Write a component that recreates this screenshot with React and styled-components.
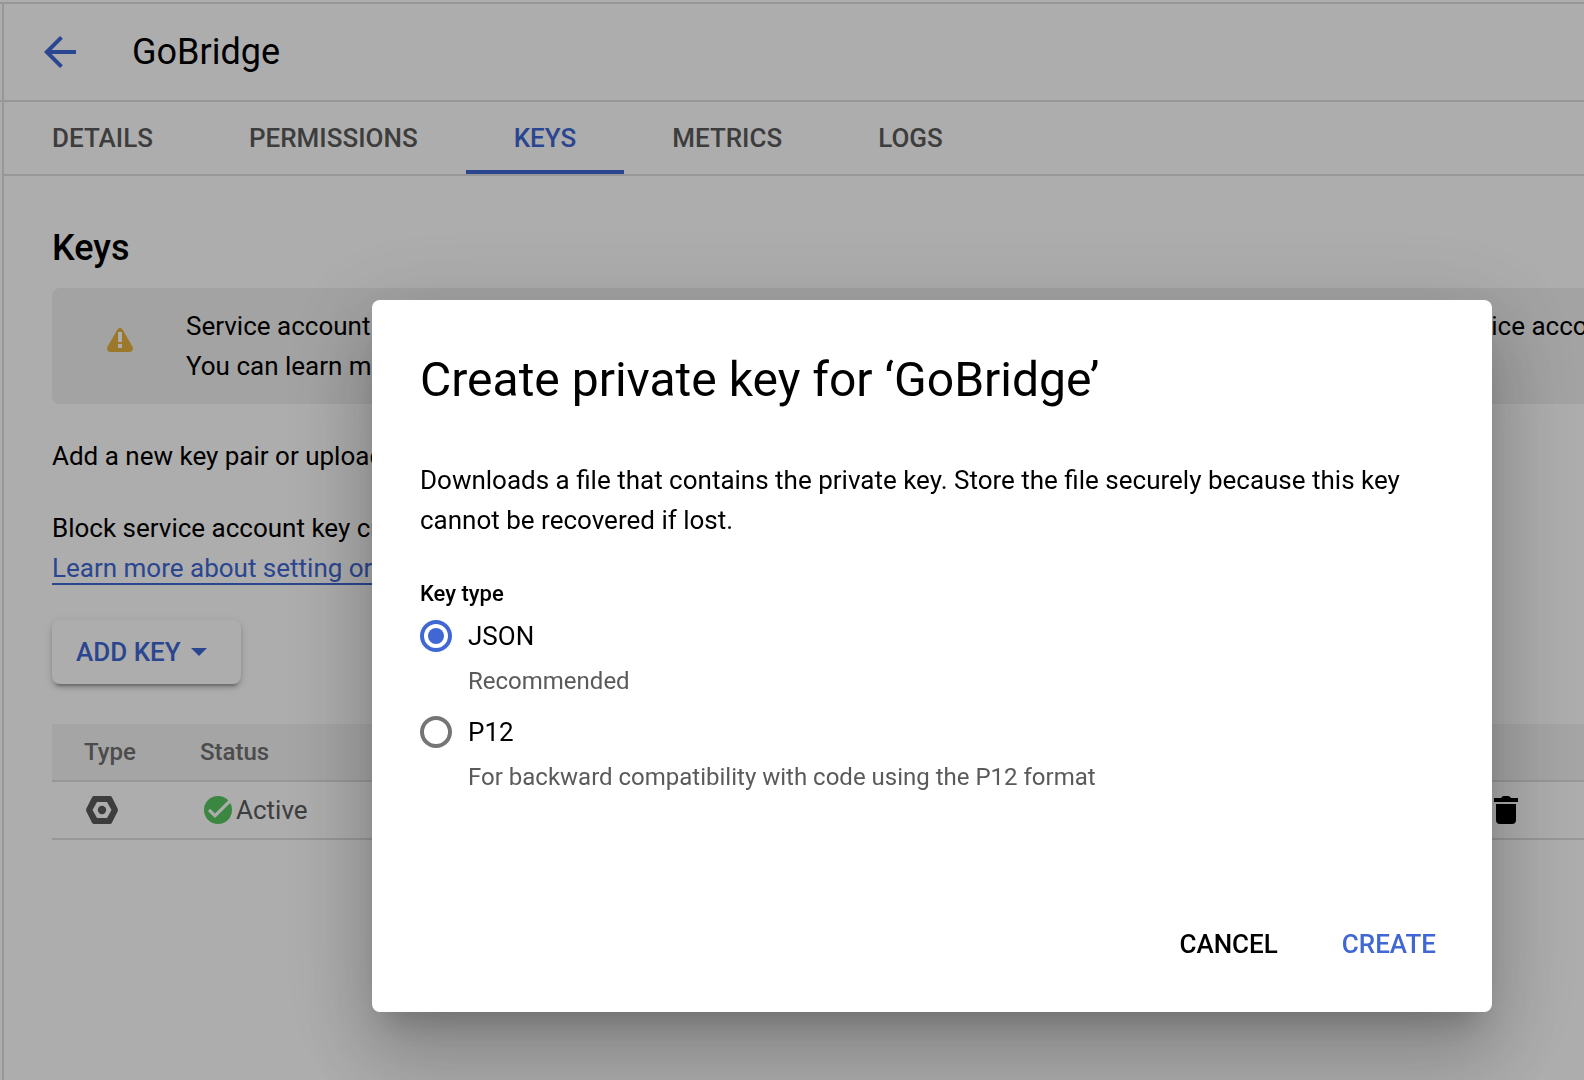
import React, { useState } from "react";
import styled, { createGlobalStyle } from "styled-components";

const blue = "#4067d4";
const line = "#dfdfdf";
const grey = "#5a5a5a";

const GlobalStyle = createGlobalStyle`
  *, *::before, *::after { box-sizing: border-box; }
  body {
    margin: 0;
    background: #ffffff;
    color: #000000;
    font: 400 26px/40px Roboto, "Liberation Sans", sans-serif;
    overflow: hidden;
  }
  button { font: inherit; border: 0; background: none; cursor: pointer; }
  h1, h2, p, fieldset { margin: 0; padding: 0; border: 0; min-width: 0; }
`;

const Page = styled.div`
  display: flex;
  flex-direction: column;
  min-height: 100vh;
  overflow: hidden;
`;

const TopEdge = styled.div`
  height: 4px;
  border-bottom: 2px solid ${line};
`;

const Shell = styled.div`
  display: flex;
  flex: 1;
`;

const Rail = styled.div`
  flex: none;
  width: 4px;
  border-right: 2px solid ${line};
`;

const RailHead = styled.div`
  height: 98px;
  border-bottom: 2px solid ${line};
`;

const Main = styled.main`
  flex: 1;
  min-width: 0;
`;

const Header = styled.header`
  display: flex;
  align-items: center;
  gap: 48px;
  height: 98px;
  padding: 0 32px;
  border-bottom: 2px solid ${line};
`;

const BackButton = styled.button`
  display: flex;
  padding: 0;
  color: ${blue};
`;

const PageTitle = styled.h1`
  font-size: 36px;
  font-weight: 400;
  line-height: 48px;
`;

const Tabs = styled.nav`
  display: flex;
  height: 74px;
  border-bottom: 2px solid ${line};
`;

const Tab = styled.a`
  display: flex;
  align-items: center;
  padding: 0 48px;
  font-weight: 500;
  text-decoration: none;
  color: ${(p) => (p.$active ? blue : grey)};
  box-shadow: ${(p) => (p.$active ? `inset 0 -4px 0 ${blue}` : "none")};
`;

const Content = styled.div`
  padding: 48px 0 48px 48px;
`;

const SectionTitle = styled.h2`
  font-size: 36px;
  font-weight: 500;
  line-height: 48px;
`;

const Banner = styled.div`
  display: flex;
  gap: 53px;
  margin-top: 16px;
  padding: 18px 0 18px 55px;
  border-radius: 8px 0 0 8px;
  background: #f0f0f0;
  white-space: nowrap;
  overflow: hidden;

  svg {
    flex: none;
    margin-top: 22px;
  }
`;

const Paragraph = styled.p`
  margin-top: 32px;
  white-space: nowrap;
`;

const TextLink = styled.a`
  color: ${blue};
  text-decoration: none;
  border-bottom: 2px solid ${blue};
`;

const AddButton = styled.button`
  display: flex;
  align-items: center;
  gap: 10px;
  height: 64px;
  margin: 32px 0 40px;
  padding: 0 34px 0 24px;
  border-radius: 8px;
  font-weight: 500;
  color: ${blue};
  background: #ffffff;
  box-shadow: 0 6px 2px -4px rgba(0, 0, 0, 0.2), 0 4px 4px rgba(0, 0, 0, 0.14),
    0 2px 10px rgba(0, 0, 0, 0.12);
`;

const KeyTable = styled.table`
  width: 100%;
  table-layout: fixed;
  border-collapse: separate;
  border-spacing: 0;
`;

const HeadCell = styled.th`
  width: ${(p) => p.$width || "auto"};
  height: 58px;
  padding: 0 0 0 32px;
  border-bottom: 2px solid ${line};
  background: #f3f3f3;
  color: #717171;
  font-size: 24px;
  font-weight: 500;
  line-height: 32px;
  text-align: left;
`;

const Cell = styled.td`
  height: 58px;
  padding: 0 0 0 ${(p) => (p.$flush ? "0" : "32px")};
  border-bottom: 2px solid ${line};
  color: ${grey};
`;

const CellContent = styled.div`
  display: flex;
  align-items: center;
`;

const DeleteButton = styled.button`
  display: flex;
  padding: 0;
  color: #000000;
`;

const Backdrop = styled.div`
  position: fixed;
  inset: 0;
  display: flex;
  align-items: center;
  justify-content: center;
  padding: 232px 0 0 280px;
  background: rgba(0, 0, 0, 0.32);
`;

const Dialog = styled.div`
  width: 100%;
  max-width: 1120px;
  border-radius: 8px;
  background: #ffffff;
  box-shadow: 0 22px 30px -14px rgba(0, 0, 0, 0.2),
    0 48px 76px 6px rgba(0, 0, 0, 0.14), 0 18px 92px 16px rgba(0, 0, 0, 0.12);
`;

const DialogBody = styled.div`
  padding: 48px 48px 0;
`;

const DialogTitle = styled.h2`
  margin-bottom: 48px;
  font-size: 48px;
  font-weight: 400;
  line-height: 64px;
`;

const KeyTypes = styled.fieldset`
  display: flex;
  flex-direction: column;
  gap: 14px;
  margin-top: 40px;
`;

const Legend = styled.legend`
  padding: 0;
  margin-bottom: 8px;
  font-size: 22px;
  font-weight: 500;
  line-height: 28px;
`;

const OptionLabel = styled.label`
  display: flex;
  align-items: center;
  gap: 16px;
`;

const Radio = styled.input`
  appearance: none;
  width: 32px;
  height: 32px;
  margin: 0;
  padding: 4px;
  border: 4px solid #757575;
  border-radius: 50%;
  background-clip: content-box;

  &:checked {
    border-color: ${blue};
    background-color: ${blue};
  }
`;

const Hint = styled.p`
  margin: 8px 0 0 48px;
  color: ${grey};
  font-size: 24px;
  line-height: 34px;
`;

const Actions = styled.div`
  display: flex;
  justify-content: flex-end;
  gap: 16px;
  padding: 114px 32px 32px;
`;

const ActionButton = styled.button`
  height: 72px;
  padding: 0 24px;
  font-weight: 500;
  color: ${(p) => (p.$primary ? blue : "#000000")};
`;

const BackIcon = () => (
  <svg width="48" height="48" viewBox="0 0 24 24" fill="currentColor" aria-hidden="true">
    <path d="M20 11H7.83l5.59-5.59L12 4l-8 8 8 8 1.41-1.41L7.83 13H20v-2z" />
  </svg>
);

const WarningIcon = () => (
  <svg width="26" height="24" viewBox="0 0 26 24" aria-hidden="true">
    <path
      d="M10.3 1.7C11.5-.5 14.5-.5 15.7 1.7L25.4 18.6C26.8 21.2 25.4 24 22.6 24H3.4C.6 24-.8 21.2.6 18.6Z"
      fill="#e6b33e"
    />
    <path d="M11 4h4v10h-4zM11 16h4v4h-4z" fill="#ffffff" />
  </svg>
);

const CaretIcon = () => (
  <svg width="16" height="8" viewBox="0 0 16 8" fill="currentColor" aria-hidden="true">
    <path d="M0 0h16L8 8z" />
  </svg>
);

const KeyTypeIcon = () => (
  <svg width="36" height="36" viewBox="0 0 36 36" fill={grey} role="img" aria-label="Service account key">
    <path
      fillRule="evenodd"
      d="M10 4h16q1.200 0 1.800 1l5.800 11.600q.7 1.400 0 2.800L27.800 31q-.6 1-1.800 1H10q-1.200 0-1.800-1L2.400 19.400q-.7-1.400 0-2.800L8.200 5q.6-1 1.800-1zM13 10L8.500 18l4.500 8h10l4.500-8L23 10z"
    />
    <circle cx="18" cy="18" r="4.200" />
  </svg>
);

const ActiveIcon = () => (
  <svg width="36" height="36" viewBox="0 0 36 36" fill="none" aria-hidden="true">
    <circle cx="18" cy="18" r="14" fill="#58c661" />
    <path d="M9 17.800l6 6L30.500 8.300" stroke="#ffffff" strokeWidth="3.200" />
  </svg>
);

const TrashIcon = () => (
  <svg width="24" height="28" viewBox="0 0 24 28" fill="currentColor" aria-hidden="true">
    <path d="M0 2h7q1-2 3-2h4q2 0 3 2h7v4H0zM2 8h20v16q0 4-4 4H6q-4 0-4-4z" />
  </svg>
);

const tabs = ["DETAILS", "PERMISSIONS", "KEYS", "METRICS", "LOGS"];

const keyTypes = [
  { id: "json", label: "JSON", hint: "Recommended" },
  { id: "p12", label: "P12", hint: "For backward compatibility with code using the P12 format" },
];

export default function App() {
  const [keyType, setKeyType] = useState("json");

  return (
    <>
      <GlobalStyle />
      <Page>
        <TopEdge />
        <Shell>
          <Rail>
            <RailHead />
          </Rail>
          <Main>
            <Header>
              <BackButton aria-label="Back">
                <BackIcon />
              </BackButton>
              <PageTitle>GoBridge</PageTitle>
            </Header>
            <Tabs>
              {tabs.map((tab) => (
                <Tab key={tab} href={`#${tab.toLowerCase()}`} $active={tab === "KEYS"}>
                  {tab}
                </Tab>
              ))}
            </Tabs>
            <Content>
              <SectionTitle>Keys</SectionTitle>
              <Banner>
                <WarningIcon />
                <p>
                  Service account keys could pose a security risk if compromised. We recommend that
                  you avoid downloading service account keys
                  <br />
                  You can learn more about the best way to authenticate service accounts
                </p>
              </Banner>
              <Paragraph>Add a new key pair or upload a public key certificate.</Paragraph>
              <Paragraph>
                Block service account key creation using organization policies.
                <br />
                <TextLink href="#policies">Learn more about setting organization policies</TextLink>
              </Paragraph>
              <AddButton>
                ADD KEY
                <CaretIcon />
              </AddButton>
              <KeyTable>
                <thead>
                  <tr>
                    <HeadCell $width="116px">Type</HeadCell>
                    <HeadCell $width="204px">Status</HeadCell>
                    <HeadCell>Key</HeadCell>
                    <HeadCell $width="90px" aria-label="Actions" />
                  </tr>
                </thead>
                <tbody>
                  <tr>
                    <Cell>
                      <CellContent>
                        <KeyTypeIcon />
                      </CellContent>
                    </Cell>
                    <Cell>
                      <CellContent>
                        <ActiveIcon />
                        Active
                      </CellContent>
                    </Cell>
                    <Cell />
                    <Cell $flush>
                      <DeleteButton aria-label="Delete key">
                        <TrashIcon />
                      </DeleteButton>
                    </Cell>
                  </tr>
                </tbody>
              </KeyTable>
            </Content>
          </Main>
        </Shell>
      </Page>
      <Backdrop>
        <Dialog role="dialog" aria-modal="true" aria-labelledby="dialog-title">
          <DialogBody>
            <DialogTitle id="dialog-title">Create private key for ‘GoBridge’</DialogTitle>
            <p>
              Downloads a file that contains the private key. Store the file securely because this
              key cannot be recovered if lost.
            </p>
            <KeyTypes>
              <Legend>Key type</Legend>
              {keyTypes.map(({ id, label, hint }) => (
                <div key={id}>
                  <OptionLabel htmlFor={id}>
                    <Radio
                      type="radio"
                      id={id}
                      name="key-type"
                      aria-describedby={`${id}-hint`}
                      checked={keyType === id}
                      onChange={() => setKeyType(id)}
                    />
                    {label}
                  </OptionLabel>
                  <Hint id={`${id}-hint`}>{hint}</Hint>
                </div>
              ))}
            </KeyTypes>
          </DialogBody>
          <Actions>
            <ActionButton>CANCEL</ActionButton>
            <ActionButton $primary>CREATE</ActionButton>
          </Actions>
        </Dialog>
      </Backdrop>
    </>
  );
}
